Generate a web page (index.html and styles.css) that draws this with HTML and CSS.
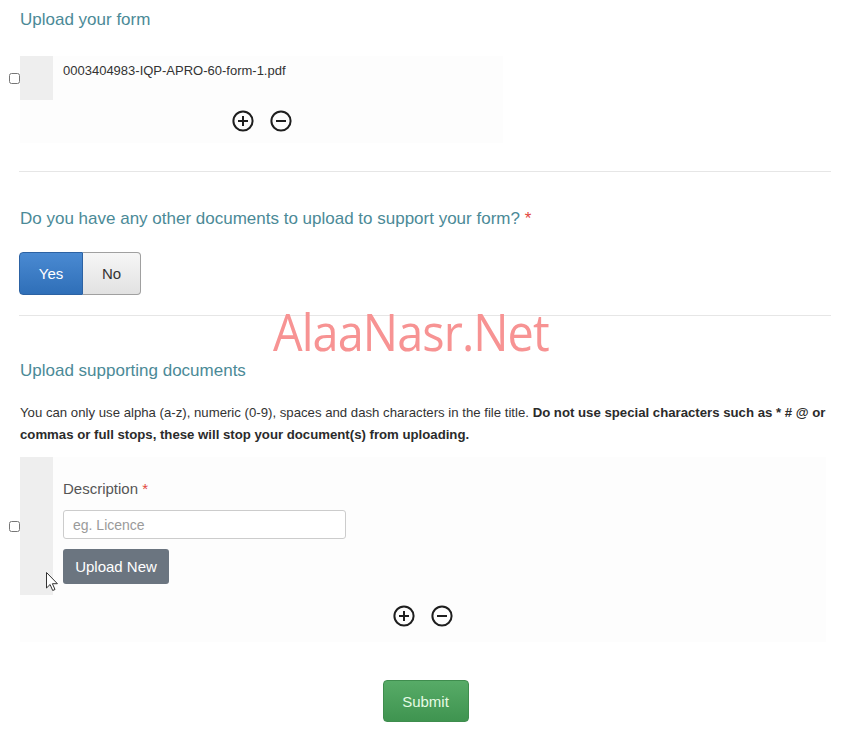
FILE: index.html
```html
<!DOCTYPE html>
<html lang="en">
<head>
<meta charset="utf-8">
<title>Upload your form</title>
<link rel="stylesheet" href="styles.css">
</head>
<body>
<div class="page">
  <h2 class="heading first">Upload your form</h2>

  <div class="entry entry-form">
    <div class="check"><input type="checkbox"></div>
    <div class="item">
      <div class="bar bar-short"></div>
      <div class="item-body"><span class="filename">0003404983-IQP-APRO-60-form-1.pdf</span></div>
    </div>
    <div class="actions">
      <svg class="icon" viewBox="0 0 22 22"><circle cx="11" cy="11" r="9.6"/><path d="M11 6v10M6 11h10"/></svg>
      <svg class="icon" viewBox="0 0 22 22"><circle cx="11" cy="11" r="9.6"/><path d="M6 11h10"/></svg>
    </div>
  </div>

  <hr class="rule rule-one">

  <h2 class="heading question">Do you have any other documents to upload to support your form? <span class="req">*</span></h2>

  <div class="toggle">
    <button class="toggle-btn yes">Yes</button><button class="toggle-btn no">No</button>
  </div>

  <hr class="rule rule-two">

  <div class="watermark">AlaaNasr.Net</div>

  <h2 class="heading supporting">Upload supporting documents</h2>

  <p class="note">You can only use alpha (a-z), numeric (0-9), spaces and dash characters in the file title. <strong>Do not use special characters such as * # @ or<br>commas or full stops, these will stop your document(s) from uploading.</strong></p>

  <div class="entry entry-docs">
    <div class="check"><input type="checkbox"></div>
    <div class="item">
      <div class="bar bar-tall"></div>
      <div class="item-body doc-body">
        <label class="desc-label">Description <span class="req">*</span></label>
        <input class="desc-input" type="text" placeholder="eg. Licence">
        <button class="upload-btn">Upload New</button>
      </div>
      <svg class="cursor" viewBox="0 0 12 19"><path d="M0.5 0.5v15.5l3.6-3.5 2.6 6 2.3-1-2.6-5.8h5z"/></svg>
    </div>
    <div class="actions actions-docs">
      <svg class="icon" viewBox="0 0 22 22"><circle cx="11" cy="11" r="9.6"/><path d="M11 6v10M6 11h10"/></svg>
      <svg class="icon" viewBox="0 0 22 22"><circle cx="11" cy="11" r="9.6"/><path d="M6 11h10"/></svg>
    </div>
  </div>

  <div class="submit-row">
    <button class="submit-btn">Submit</button>
  </div>
</div>
</body>
</html>
```

FILE: styles.css
```css
* { box-sizing: border-box; }

html, body {
  margin: 0;
  padding: 0;
  background: #ffffff;
}

body {
  font-family: "Liberation Sans", Arial, sans-serif;
  color: #333333;
}

.page {
  position: relative;
  padding: 0 10px 0 20px;
  height: 743px;
  overflow: hidden;
}

.heading {
  margin: 0;
  font-size: 17px;
  font-weight: normal;
  line-height: 20px;
  color: #4b8a97;
}

.heading.first { padding-top: 10px; }
.heading.question { margin-top: 37px; }
.heading.supporting { margin-top: 45px; }

.req {
  color: #e2473d;
}

/* upload entries */
.entry {
  display: grid;
  margin-left: -12px;
}

.entry-form {
  margin-top: 26px;
  grid-template-columns: 12px 483px;
}

.entry-docs {
  margin-top: 11px;
  grid-template-columns: 12px 806px;
}

.check {
  grid-column: 1;
  grid-row: 1;
  align-self: center;
  display: flex;
}

.check input {
  width: 11px;
  height: 11px;
  margin: 0 0 0 1px;
}

.item {
  position: relative;
  grid-column: 2;
  grid-row: 1;
  display: flex;
  background: #fdfdfd;
}

.bar {
  width: 33px;
  flex: none;
  background: #eeeeee;
}

.bar-short { height: 44px; }
.bar-tall { height: 138px; }

.item-body {
  padding: 5px 0 0 10px;
}

.filename {
  font-size: 13px;
  line-height: 16px;
  color: #333333;
}

.actions {
  grid-column: 2;
  grid-row: 2;
  display: flex;
  justify-content: center;
  gap: 16px;
  padding: 10px 0 11px;
  background: #fdfdfd;
}

.actions-docs {
  padding: 10px 0 15px;
}

.icon {
  width: 22px;
  height: 22px;
  fill: none;
  stroke: #1e1e1e;
  stroke-width: 2;
}

.rule {
  border: 0;
  border-top: 1px solid #e6e6e6;
  margin: 0 0 0 -1px;
}

.rule-one { margin-top: 28px; }
.rule-two { margin-top: 20px; }

/* yes / no toggle */
.toggle {
  display: flex;
  margin: 23px 0 0 -1px;
}

.toggle-btn {
  font-family: "Liberation Sans", Arial, sans-serif;
  font-size: 15px;
  height: 43px;
  padding: 0;
  cursor: pointer;
}

.toggle-btn.yes {
  width: 64px;
  color: #ffffff;
  background: linear-gradient(#4a8ad2, #2f6fb8);
  border: 1px solid #2c62a3;
  border-radius: 4px 0 0 4px;
}

.toggle-btn.no {
  width: 58px;
  color: #333333;
  background: linear-gradient(#f6f6f6, #e2e2e2);
  border: 1px solid #a0a0a0;
  border-left: 0;
  border-radius: 0 4px 4px 0;
}

/* watermark overlay */
.watermark {
  position: absolute;
  left: 273px;
  top: 299px;
  font-family: "Open Sans", sans-serif;
  font-size: 52px;
  line-height: 64px;
  color: #f79393;
  letter-spacing: -1px;
  transform: scaleX(0.9);
  transform-origin: left center;
  pointer-events: none;
}

.note {
  margin: 21px 0 0;
  font-size: 13.2px;
  line-height: 22px;
  color: #333333;
}

.note strong {
  color: #2b2b2b;
}

/* description form */
.doc-body {
  padding: 22px 0 0 10px;
  display: flex;
  flex-direction: column;
  align-items: flex-start;
}

.desc-label {
  font-size: 15px;
  line-height: 20px;
  color: #555555;
}

.desc-input {
  margin-top: 11px;
  width: 283px;
  height: 29px;
  border: 1px solid #cccccc;
  border-radius: 3px;
  padding: 0 9px;
  font-family: "Liberation Sans", Arial, sans-serif;
  font-size: 14px;
  color: #333333;
  background: #ffffff;
}

.desc-input::placeholder {
  color: #9a9a9a;
}

.upload-btn {
  margin-top: 10px;
  width: 106px;
  height: 35px;
  border: 0;
  border-radius: 3px;
  background: #6b7580;
  color: #ffffff;
  font-family: "Liberation Sans", Arial, sans-serif;
  font-size: 15px;
  padding: 0;
}

.cursor {
  position: absolute;
  left: 26px;
  top: 115px;
  width: 12px;
  height: 19px;
  fill: #ffffff;
  stroke: #333333;
  stroke-width: 1;
}

.submit-row {
  display: flex;
  justify-content: center;
  margin-top: 38px;
}

.submit-btn {
  width: 86px;
  height: 42px;
  border: 1px solid #3f8d4e;
  border-radius: 4px;
  background: linear-gradient(#57ab67, #3f9450);
  color: #e6fbe4;
  font-family: "Liberation Sans", Arial, sans-serif;
  font-size: 15px;
  padding: 0;
}
```
